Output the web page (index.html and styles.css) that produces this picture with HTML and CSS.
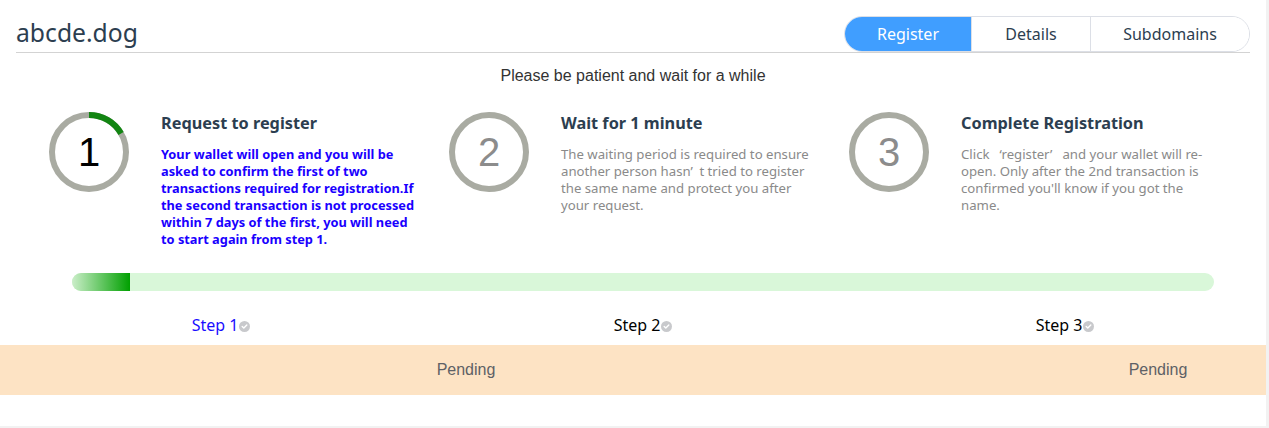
FILE: index.html
```html
<!DOCTYPE html>
<html lang="en">
<head>
<meta charset="utf-8">
<title>abcde.dog</title>
<link rel="stylesheet" href="styles.css">
</head>
<body>
<div class="page">
  <header class="header">
    <h1 class="domain">abcde.dog</h1>
    <nav class="tabs">
      <span class="tab tab-register active">Register</span>
      <span class="tab tab-details">Details</span>
      <span class="tab tab-subdomains">Subdomains</span>
    </nav>
  </header>

  <p class="notice">Please be patient and wait for a while</p>

  <section class="steps">
    <div class="step">
      <div class="ring ring-active">
        <svg class="arc" width="80" height="80" viewBox="0 0 80 80"><circle cx="40" cy="40" r="37" fill="none" stroke="#128512" stroke-width="6" stroke-dasharray="38.7 300" transform="rotate(-90 40 40)"/></svg>
        <span class="digit">1</span>
      </div>
      <div class="step-text">
        <h2 class="step-title">Request to register</h2>
        <p class="step-desc desc-active">Your wallet will open and you will be asked to confirm the first of two transactions required for registration.If the second transaction is not processed within 7 days of the first, you will need to start again from step 1.</p>
      </div>
    </div>
    <div class="step">
      <div class="ring">
        <span class="digit">2</span>
      </div>
      <div class="step-text">
        <h2 class="step-title">Wait for 1 minute</h2>
        <p class="step-desc">The waiting period is required to ensure another person hasn’&ensp;t tried to register the same name and protect you after your request.</p>
      </div>
    </div>
    <div class="step">
      <div class="ring">
        <span class="digit">3</span>
      </div>
      <div class="step-text">
        <h2 class="step-title">Complete Registration</h2>
        <p class="step-desc">Click&ensp; ‘register’&ensp; and your wallet will re-open. Only after the 2nd transaction is confirmed you'll know if you got the name.</p>
      </div>
    </div>
  </section>

  <div class="progress">
    <div class="progress-fill" style="width: 58px"></div>
  </div>

  <div class="labels">
    <div class="label label-current">Step 1<span class="check"><svg width="11" height="11" viewBox="0 0 11 11"><circle cx="5.5" cy="5.5" r="5.5" fill="#c8c9cc"/><path d="M3.2 5.6 L4.8 7.1 L7.8 4" fill="none" stroke="#fff" stroke-width="1.4" stroke-linecap="round" stroke-linejoin="round"/></svg></span></div>
    <div class="label">Step 2<span class="check"><svg width="11" height="11" viewBox="0 0 11 11"><circle cx="5.5" cy="5.5" r="5.5" fill="#c8c9cc"/><path d="M3.2 5.6 L4.8 7.1 L7.8 4" fill="none" stroke="#fff" stroke-width="1.4" stroke-linecap="round" stroke-linejoin="round"/></svg></span></div>
    <div class="label">Step 3<span class="check"><svg width="11" height="11" viewBox="0 0 11 11"><circle cx="5.5" cy="5.5" r="5.5" fill="#c8c9cc"/><path d="M3.2 5.6 L4.8 7.1 L7.8 4" fill="none" stroke="#fff" stroke-width="1.4" stroke-linecap="round" stroke-linejoin="round"/></svg></span></div>
  </div>

  <div class="status">
    <div class="status-cell">Pending</div>
    <div class="status-cell"></div>
    <div class="status-cell">Pending</div>
  </div>
</div>
</body>
</html>
```

FILE: styles.css
```css
* { box-sizing: border-box; }

html, body {
  margin: 0;
  padding: 0;
  background: #f2f2f2;
}

body {
  font-family: "Noto Sans", "Noto Sans CJK SC", sans-serif;
  color: #2c3e50;
}

.page {
  width: 1266px;
  height: 426px;
  background: #fff;
  overflow: hidden;
}

.header {
  margin: 0 16px;
  height: 53px;
  padding-top: 16px;
  display: flex;
  justify-content: space-between;
  align-items: flex-end;
  border-bottom: 1px solid #d3d3d3;
}

.domain {
  margin: 0 0 3px 0;
  font-size: 24.7px;
  font-weight: 400;
  line-height: 32px;
  color: #2c3e50;
}

.tabs {
  display: flex;
  height: 36px;
  border: 1px solid #dcdfe6;
  border-radius: 18px;
  overflow: hidden;
}

.tab {
  display: flex;
  align-items: center;
  justify-content: center;
  font-size: 16px;
  color: #2c3e50;
  background: #fff;
}

.tab + .tab { border-left: 1px solid #dcdfe6; }

.tab-register { width: 126px; }
.tab-details { width: 119px; }
.tab-subdomains { width: 159px; }

.tab.active {
  background: #409eff;
  color: #fff;
}

.notice {
  margin: 13px 0 0 0;
  text-align: center;
  font-family: "Liberation Sans", Arial, sans-serif;
  font-size: 16px;
  line-height: 20px;
  color: #333;
}

.steps {
  margin: 26px 0 0 48px;
  display: grid;
  grid-template-columns: repeat(3, 400px);
}

.step {
  display: flex;
  align-items: flex-start;
}

.ring {
  position: relative;
  flex: none;
  width: 80px;
  height: 80px;
  margin-left: 1px;
  border: 6px solid #a9aba2;
  border-radius: 50%;
  display: flex;
  align-items: center;
  justify-content: center;
}

.arc {
  position: absolute;
  left: -6px;
  top: -6px;
}

.digit {
  font-family: "Liberation Sans", Arial, sans-serif;
  font-size: 40px;
  line-height: 1;
  color: #8c8c8c;
}

.ring-active .digit { color: #000; }

.step-text {
  margin-left: 32px;
  width: 258px;
}

.step-title {
  margin: 1px 0 0 0;
  font-size: 16.3px;
  font-weight: 700;
  line-height: 20px;
  color: #2c3e50;
}

.step-desc {
  margin: 13px 0 0 0;
  font-size: 13.2px;
  line-height: 17px;
  color: #8a8a8a;
}

.desc-active {
  font-size: 12.8px;
  color: #1a00ff;
  font-weight: 700;
}

.progress {
  margin: 25px 0 0 72px;
  width: 1142px;
  height: 18px;
  border-radius: 9px;
  background: #d9f7d9;
  overflow: hidden;
}

.progress-fill {
  height: 100%;
  background: linear-gradient(to right, #cbeec9, #00a000);
}

.labels {
  margin: 24px 0 0 10px;
  display: grid;
  grid-template-columns: repeat(3, 422px);
}

.label {
  text-align: center;
  font-size: 16px;
  line-height: 20px;
  color: #000;
}

.label-current { color: #1a0dff; }

.check {
  display: inline-block;
  width: 11px;
  height: 11px;
  margin-left: 1px;
  vertical-align: -1px;
}

.check svg { display: block; }

.status {
  margin-top: 10px;
  height: 50px;
  background: #fde3c4;
  display: grid;
  grid-template-columns: 932px 118px 216px;
  align-items: center;
}

.status-cell {
  text-align: center;
  font-family: "Liberation Sans", Arial, sans-serif;
  font-size: 16px;
  color: #5e6166;
}
```
